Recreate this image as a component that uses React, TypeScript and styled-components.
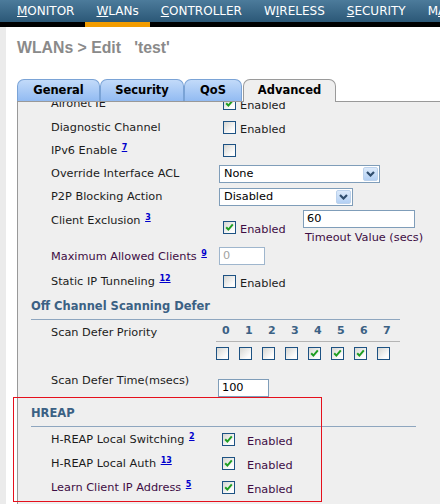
import React, { FC, ReactNode } from 'react';
import styled, { createGlobalStyle } from 'styled-components';

const GlobalStyle = createGlobalStyle`
  html, body {
    margin: 0;
    padding: 0;
    background: #fff;
  }
  body {
    font-family: "DejaVu Sans", Verdana, sans-serif;
  }
`;

const CheckMark: FC = () => (
  <svg width="11" height="11" viewBox="0 0 11 11">
    <polyline
      points="2.2,5.2 4.4,7.6 8.8,2.4"
      fill="none"
      stroke="#1f9e22"
      strokeWidth="2"
    />
  </svg>
);

const Chevron: FC = () => (
  <svg width="9" height="6" viewBox="0 0 9 6">
    <polyline
      points="1,1 4.5,4.5 8,1"
      fill="none"
      stroke="#2f4d6d"
      strokeWidth="2.2"
    />
  </svg>
);

type CheckProps = {
  checked?: boolean;
  text?: string;
  gap?: number;
  drop?: number;
  indent?: number;
  top?: number;
  purple?: boolean;
};

const Check: FC<CheckProps> = ({
  checked,
  text,
  gap = 4,
  drop = 4,
  indent = 4,
  top,
  purple,
}) => (
  <CheckFieldStyled $indent={indent} $top={top}>
    <BoxStyled>{checked && <CheckMark />}</BoxStyled>
    {text && (
      <CheckTextStyled $gap={gap} $drop={drop} $purple={purple}>
        {text}
      </CheckTextStyled>
    )}
  </CheckFieldStyled>
);

const Select: FC<{ width: number; value: string }> = ({ width, value }) => (
  <SelectStyled $w={width}>
    <span>{value}</span>
    <SelectButtonStyled>
      <Chevron />
    </SelectButtonStyled>
  </SelectStyled>
);

const Label: FC<{ text: string; note?: string; pt?: number; purple?: boolean }> = ({
  text,
  note,
  pt,
  purple,
}) => (
  <LabelStyled $pt={pt} $purple={purple}>
    {text}
    {note && (
      <>
        {' '}
        <SupStyled href="#">{note}</SupStyled>
      </>
    )}
  </LabelStyled>
);

const Field: FC<{ children: ReactNode }> = ({ children }) => (
  <FieldStyled>{children}</FieldStyled>
);

const priorities = [false, false, false, false, true, true, true, false];

const App: FC = () => {
  return (
    <>
      <GlobalStyle />
      <ScreenStyled>
        <NavBarStyled>
          <NavItemStyled href="#">
            <u>M</u>ONITOR
          </NavItemStyled>
          <NavItemStyled href="#" $active>
            <u>W</u>LANs
          </NavItemStyled>
          <NavItemStyled href="#">
            <u>C</u>ONTROLLER
          </NavItemStyled>
          <NavItemStyled href="#">
            W<u>I</u>RELESS
          </NavItemStyled>
          <NavItemStyled href="#">
            <u>S</u>ECURITY
          </NavItemStyled>
          <NavItemStyled href="#">
            M<u>A</u>NAGEMENT
          </NavItemStyled>
        </NavBarStyled>

        <BodyStyled>
          <LeftStripStyled />
          <MainStyled>
            <TitleStyled>{"WLANs > Edit   'test'"}</TitleStyled>

            <TabBarStyled>
              <TabStyled $w={83}>General</TabStyled>
              <TabStyled $w={84}>Security</TabStyled>
              <TabStyled $w={58} $mr={1}>
                QoS
              </TabStyled>
              <TabStyled $w={93} $active>
                Advanced
              </TabStyled>
            </TabBarStyled>

            <PanelStyled>
              <ScrollerStyled>
                <RowStyled $h={24}>
                  <Label text="Aironet IE" />
                  <Field>
                    <Check checked text="Enabled" />
                  </Field>
                </RowStyled>
                <RowStyled $h={24}>
                  <Label text="Diagnostic Channel" />
                  <Field>
                    <Check text="Enabled" />
                  </Field>
                </RowStyled>
                <RowStyled $h={23}>
                  <Label text="IPv6 Enable" note="7" />
                  <Field>
                    <Check />
                  </Field>
                </RowStyled>
                <RowStyled $h={23}>
                  <Label text="Override Interface ACL" />
                  <Field>
                    <Select width={161} value="None" />
                  </Field>
                </RowStyled>
                <RowStyled $h={23}>
                  <Label text="P2P Blocking Action" />
                  <Field>
                    <Select width={134} value="Disabled" />
                  </Field>
                </RowStyled>
                <RowStyled $h={38} $align="start">
                  <Label text="Client Exclusion" note="3" pt={6} />
                  <ExclusionStyled>
                    <Check checked text="Enabled" top={11} purple />
                    <TimeoutStyled>
                      <TextBoxStyled $w={112} $mt={2}>
                        60
                      </TextBoxStyled>
                      <HintStyled>Timeout Value (secs)</HintStyled>
                    </TimeoutStyled>
                  </ExclusionStyled>
                </RowStyled>
                <RowStyled $h={22} $align="start">
                  <Label text="Maximum Allowed Clients" note="9" pt={4} purple />
                  <Field>
                    <TextBoxStyled $w={46} $mt={1} $disabled>
                      0
                    </TextBoxStyled>
                  </Field>
                </RowStyled>
                <RowStyled $h={26}>
                  <Label text="Static IP Tunneling" note="12" />
                  <Field>
                    <Check text="Enabled" />
                  </Field>
                </RowStyled>

                <SectionHeaderStyled $w={369} $pt={5}>
                  Off Channel Scanning Defer
                </SectionHeaderStyled>

                <RowStyled $h={51} $align="start">
                  <Label text="Scan Defer Priority" pt={6} />
                  <PriorityStyled>
                    <PriorityNumbersStyled>
                      {priorities.map((_, i) => (
                        <PriorityNumberStyled key={i}>{i}</PriorityNumberStyled>
                      ))}
                    </PriorityNumbersStyled>
                    <PriorityChecksStyled>
                      {priorities.map((on, i) => (
                        <Check key={i} checked={on} indent={6} />
                      ))}
                    </PriorityChecksStyled>
                  </PriorityStyled>
                </RowStyled>

                <RowStyled $h={28} $align="start">
                  <Label text="Scan Defer Time(msecs)" pt={3} />
                  <Field>
                    <TextBoxStyled $w={51} $mt={8} $ml={-1}>
                      100
                    </TextBoxStyled>
                  </Field>
                </RowStyled>

                <SectionHeaderStyled $w={385} $pt={7}>
                  HREAP
                </SectionHeaderStyled>

                <RowStyled $h={24}>
                  <Label text="H-REAP Local Switching" note="2" />
                  <Field>
                    <Check checked text="Enabled" gap={12} drop={5} indent={3} purple />
                  </Field>
                </RowStyled>
                <RowStyled $h={24}>
                  <Label text="H-REAP Local Auth" note="13" />
                  <Field>
                    <Check checked text="Enabled" gap={12} drop={5} indent={3} purple />
                  </Field>
                </RowStyled>
                <RowStyled $h={24}>
                  <Label text="Learn Client IP Address" note="5" purple />
                  <Field>
                    <Check checked text="Enabled" gap={12} drop={5} indent={3} purple />
                  </Field>
                </RowStyled>
              </ScrollerStyled>
            </PanelStyled>
          </MainStyled>
        </BodyStyled>

        <HighlightStyled />
      </ScreenStyled>
    </>
  );
};

export default App;

const ScreenStyled = styled.div`
  position: relative;
  width: 440px;
  height: 504px;
  overflow: hidden;
  display: flex;
  flex-direction: column;
  background: #fff;
`;

const NavBarStyled = styled.nav`
  display: flex;
  flex-shrink: 0;
  height: 22px;
  padding-left: 6px;
  background: linear-gradient(#4c7b9b, #2b5877);
  border-bottom: 5px solid #000;
  white-space: nowrap;
`;

const NavItemStyled = styled.a<{ $active?: boolean }>`
  flex-shrink: 0;
  height: 22px;
  padding: 0 11px;
  line-height: 22px;
  font-size: 12px;
  color: #fff;
  text-decoration: none;
  border-bottom: 5px solid ${(p) => (p.$active ? '#f29c00' : 'transparent')};
  u {
    text-decoration: underline;
  }
`;

const BodyStyled = styled.div`
  display: flex;
  flex: 1;
  min-height: 0;
`;

const LeftStripStyled = styled.div`
  width: 6px;
  flex-shrink: 0;
  background: #ebebeb;
`;

const MainStyled = styled.main`
  flex: 1;
  min-width: 0;
  display: flex;
  flex-direction: column;
  padding-left: 11px;
`;

const TitleStyled = styled.h1`
  margin: 12px 0 0;
  height: 18px;
  font: bold 15.8px/18px 'Liberation Sans', Arial, sans-serif;
  color: #8a8a8a;
  white-space: pre;
`;

const TabBarStyled = styled.div`
  display: flex;
  align-items: flex-end;
  flex-shrink: 0;
  height: 22px;
  margin-top: 22px;
  border-bottom: 1px solid #999;
`;

const TabStyled = styled.div<{ $w: number; $active?: boolean; $mr?: number }>`
  box-sizing: border-box;
  width: ${(p) => p.$w}px;
  height: ${(p) => (p.$active ? 23 : 22)}px;
  margin-right: ${(p) => p.$mr ?? 0}px;
  margin-bottom: ${(p) => (p.$active ? -1 : 0)}px;
  border: 1px solid ${(p) => (p.$active ? '#9a9a9a' : '#7aa3d6')};
  border-bottom: none;
  border-radius: 7px 7px 0 0;
  background: ${(p) =>
    p.$active ? '#efefef' : 'linear-gradient(#c2daf9, #92bbf2)'};
  font-size: 11.5px;
  font-weight: bold;
  line-height: 20px;
  text-align: center;
  color: #000;
`;

const PanelStyled = styled.div`
  flex: 1;
  min-height: 0;
  overflow: hidden;
  background: #efefef;
  border-left: 1px solid #999;
`;

const ScrollerStyled = styled.div`
  margin-top: -11px;
`;

const RowStyled = styled.div<{ $h: number; $align?: string }>`
  display: grid;
  grid-template-columns: 168px 1fr;
  align-items: ${(p) => p.$align ?? 'center'};
  height: ${(p) => p.$h}px;
  padding-left: 33px;
`;

const LabelStyled = styled.div<{ $pt?: number; $purple?: boolean }>`
  padding-top: ${(p) => p.$pt ?? 0}px;
  font-size: 11.3px;
  line-height: 13px;
  color: ${(p) => (p.$purple ? '#3e0d44' : '#1c1c1c')};
  white-space: nowrap;
`;

const SupStyled = styled.a`
  margin-left: 1px;
  font-size: 8px;
  font-weight: bold;
  line-height: 0;
  vertical-align: 4px;
  color: #0000cc;
  text-decoration: underline;
`;

const FieldStyled = styled.div`
  display: flex;
  align-items: center;
`;

const CheckFieldStyled = styled.div<{ $indent: number; $top?: number }>`
  display: flex;
  align-items: center;
  margin-left: ${(p) => p.$indent}px;
  margin-top: ${(p) => p.$top ?? 0}px;
`;

const BoxStyled = styled.span`
  box-sizing: border-box;
  display: flex;
  align-items: center;
  justify-content: center;
  flex-shrink: 0;
  width: 13px;
  height: 13px;
  border: 1px solid #1d5283;
  background: linear-gradient(135deg, #d6d6d2, #fcfcfc 75%);
`;

const CheckTextStyled = styled.span<{ $gap: number; $drop: number; $purple?: boolean }>`
  margin-left: ${(p) => p.$gap}px;
  margin-top: ${(p) => p.$drop}px;
  font-size: 11.3px;
  line-height: 13px;
  color: ${(p) => (p.$purple ? '#3e0d44' : '#1c1c1c')};
  white-space: nowrap;
`;

const SelectStyled = styled.div<{ $w: number }>`
  box-sizing: border-box;
  display: flex;
  align-items: center;
  justify-content: space-between;
  width: ${(p) => p.$w}px;
  height: 18px;
  padding: 0 1px 0 4px;
  border: 1px solid #7f9db9;
  background: #fff;
  font-size: 11.3px;
  color: #000;
`;

const SelectButtonStyled = styled.span`
  box-sizing: border-box;
  display: flex;
  align-items: center;
  justify-content: center;
  width: 15px;
  height: 14px;
  border: 1px solid #bcd2ec;
  border-radius: 2px;
  background: linear-gradient(#dceafb, #b3d0f4);
`;

const TextBoxStyled = styled.div<{
  $w: number;
  $mt?: number;
  $ml?: number;
  $disabled?: boolean;
}>`
  box-sizing: border-box;
  width: ${(p) => p.$w}px;
  height: 18px;
  margin-top: ${(p) => p.$mt ?? 0}px;
  margin-left: ${(p) => p.$ml ?? 0}px;
  padding-left: 3px;
  border: 1px solid ${(p) => (p.$disabled ? '#9fb6cd' : '#7f9db9')};
  background: #fff;
  font-size: 11.3px;
  line-height: 16px;
  color: ${(p) => (p.$disabled ? '#a3a3a3' : '#000')};
`;

const ExclusionStyled = styled.div`
  display: grid;
  grid-template-columns: 84px auto;
  align-items: start;
`;

const TimeoutStyled = styled.div`
  display: flex;
  flex-direction: column;
`;

const HintStyled = styled.span`
  margin-top: 3px;
  padding-left: 2px;
  font-size: 11.3px;
  line-height: 13px;
  color: #3e0d44;
  white-space: nowrap;
`;

const SectionHeaderStyled = styled.div<{ $w: number; $pt: number }>`
  width: ${(p) => p.$w}px;
  margin-left: 13px;
  padding-top: ${(p) => p.$pt}px;
  padding-bottom: 6px;
  border-bottom: 1px solid #8ea6bf;
  font-size: 11.5px;
  font-weight: bold;
  line-height: 14px;
  color: #3b6184;
`;

const PriorityStyled = styled.div`
  width: 184px;
  margin-left: -3px;
`;

const PriorityNumbersStyled = styled.div`
  display: grid;
  grid-template-columns: repeat(8, 23px);
  padding: 4px 0;
  border-bottom: 1px solid #b4b4b4;
`;

const PriorityNumberStyled = styled.span`
  padding-left: 6px;
  font-size: 11px;
  font-weight: bold;
  line-height: 13px;
  color: #3b6184;
`;

const PriorityChecksStyled = styled.div`
  display: grid;
  grid-template-columns: repeat(8, 17px);
  column-gap: 6px;
  margin-top: 5px;
  margin-left: -6px;
`;

const HighlightStyled = styled.div`
  position: absolute;
  left: 13px;
  top: 397px;
  box-sizing: border-box;
  width: 309px;
  height: 105px;
  border: 1px solid #e5101c;
  pointer-events: none;
`;
